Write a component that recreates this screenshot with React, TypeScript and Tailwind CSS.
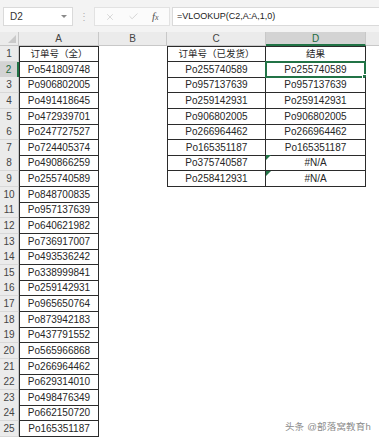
import { X, Check } from "lucide-react";

const colA = [
  "Po541809748", "Po906802005", "Po491418645", "Po472939701", "Po247727527",
  "Po724405374", "Po490866259", "Po255740589", "Po848700835", "Po957137639",
  "Po640621982", "Po736917007", "Po493536242", "Po338999841", "Po259142931",
  "Po965650764", "Po873942183", "Po437791552", "Po565966868", "Po266964462",
  "Po629314010", "Po498476349", "Po662150720", "Po165351187",
];

const colC = [
  "Po255740589", "Po957137639", "Po259142931", "Po906802005",
  "Po266964462", "Po165351187", "Po375740587", "Po258412931",
];

const colD = [
  "Po255740589", "Po957137639", "Po259142931", "Po906802005",
  "Po266964462", "Po165351187", "#N/A", "#N/A",
];

const grid = "grid grid-cols-[19px_80px_68px_99px_100px_1fr]";
const line = "border-[#2b2b2b]";

function Toolbar() {
  return (
    <div className="h-[32px] bg-[#f3f3f3] flex items-start pt-[7px]">
      <div className="ml-[3px] w-[70px] h-[19px] bg-white border border-[#dadada] flex items-center justify-between pl-[6px] pr-[5px] text-[10px] text-[#333]">
        <span>D2</span>
        <span className="w-0 h-0 border-l-[3px] border-r-[3px] border-t-[3px] border-l-transparent border-r-transparent border-t-[#8a8a8a]" />
      </div>
      <div className="w-[21px] h-[19px] flex items-center justify-center text-[10px] text-[#b0b0b0]">⋮</div>
      <div className="w-[76px] h-[19px] bg-[#fbfbfb] border border-[#e2e2e2] flex items-center justify-around px-[4px]">
        <X className="w-[10px] h-[10px] text-[#c4c4c4]" strokeWidth={1.5} />
        <Check className="w-[11px] h-[11px] text-[#c4c4c4]" strokeWidth={1.5} />
        <span className="font-['Liberation_Serif',serif] italic text-[11px] text-[#555] leading-none">
          f<span className="text-[8px]">x</span>
        </span>
      </div>
      <div className="ml-[2px] flex-1 h-[19px] bg-white border border-[#dadada] border-r-0 flex items-center pl-[4px] text-[9px] text-[#222]">
        =VLOOKUP(C2,A:A,1,0)
      </div>
    </div>
  );
}

function HeaderRow() {
  const cell = "h-[14px] flex items-center justify-center text-[10px] text-[#444] border-r border-b border-[#c8c8c8] bg-[#ebebeb]";
  return (
    <div className={grid}>
      <div className="h-[14px] bg-[#ebebeb] border-r border-b border-[#c8c8c8] flex items-end justify-end pr-[2px] pb-[2px]">
        <span className="w-0 h-0 border-b-[8px] border-b-[#c9c9c9] border-l-[8px] border-l-transparent" />
      </div>
      <div className={cell}>A</div>
      <div className={cell}>B</div>
      <div className={cell}>C</div>
      <div className="h-[14px] flex items-center justify-center text-[10px] text-[#1e6b3f] bg-[#d3d3d3] border-r border-[#c8c8c8] border-b-2 border-b-[#217346]">
        D
      </div>
      <div className="h-[14px] bg-[#ebebeb] border-b border-[#c8c8c8]" />
    </div>
  );
}

function Row({ n }: { n: number }) {
  const first = n === 1;
  const a = first ? null : colA[n - 2];
  const inCD = n <= 9;
  const c = first ? null : colC[n - 2];
  const d = first ? null : colD[n - 2];
  const sel = n === 2;
  const rowHead = sel
    ? "bg-[#d3d3d3] text-[#1e6b3f] border-r-2 border-r-[#217346]"
    : "bg-[#ebebeb] text-[#444] border-r border-r-[#c8c8c8]";
  const cjk = "text-[9.5px]";
  return (
    <div className={`${grid} h-[15.64px]`}>
      <div className={`${rowHead} border-b border-b-[#d8d8d8] flex items-center justify-center text-[10px]`}>
        {n}
      </div>
      <div className={`border-l border-r border-b ${first ? "border-t" : ""} ${line} flex items-center justify-center`}>
        {first ? <span className={cjk}>订单号（全）</span> : a}
      </div>
      <div />
      {inCD ? (
        <>
          <div className={`border-l border-r border-b ${first ? "border-t" : ""} ${line} flex items-center justify-center`}>
            {first ? <span className={cjk}>订单号（已发货）</span> : c}
          </div>
          <div className={`relative border-r border-b ${first ? "border-t" : ""} ${line} flex items-center justify-center`}>
            {first ? <span className={cjk}>结果</span> : d}
            {d === "#N/A" && (
              <span className="absolute top-0 left-0 w-0 h-0 border-t-[5px] border-r-[5px] border-t-[#217346] border-r-transparent" />
            )}
            {sel && (
              <span className="absolute -top-[1px] -left-[1px] -right-[1px] -bottom-[1px] border-2 border-[#217346]">
                <span className="absolute -right-[3px] -bottom-[3px] w-[5px] h-[5px] bg-[#217346] border border-white" />
              </span>
            )}
          </div>
        </>
      ) : (
        <>
          <div />
          <div />
        </>
      )}
      <div />
    </div>
  );
}

export default function App() {
  const rows = Array.from({ length: 25 }, (_, i) => i + 1);
  return (
    <div className="relative w-[379px] h-[441px] overflow-hidden bg-white text-[10px] text-[#262626] font-['Liberation_Sans','Noto_Sans_CJK_SC',sans-serif]">
      <Toolbar />
      <HeaderRow />
      {rows.map((n) => (
        <Row key={n} n={n} />
      ))}
      <div className="absolute right-[8px] bottom-[7px] text-[9.5px] text-[#8c8c8c] tracking-[0.2px]">
        头条 @部落窝教育h
      </div>
    </div>
  );
}
